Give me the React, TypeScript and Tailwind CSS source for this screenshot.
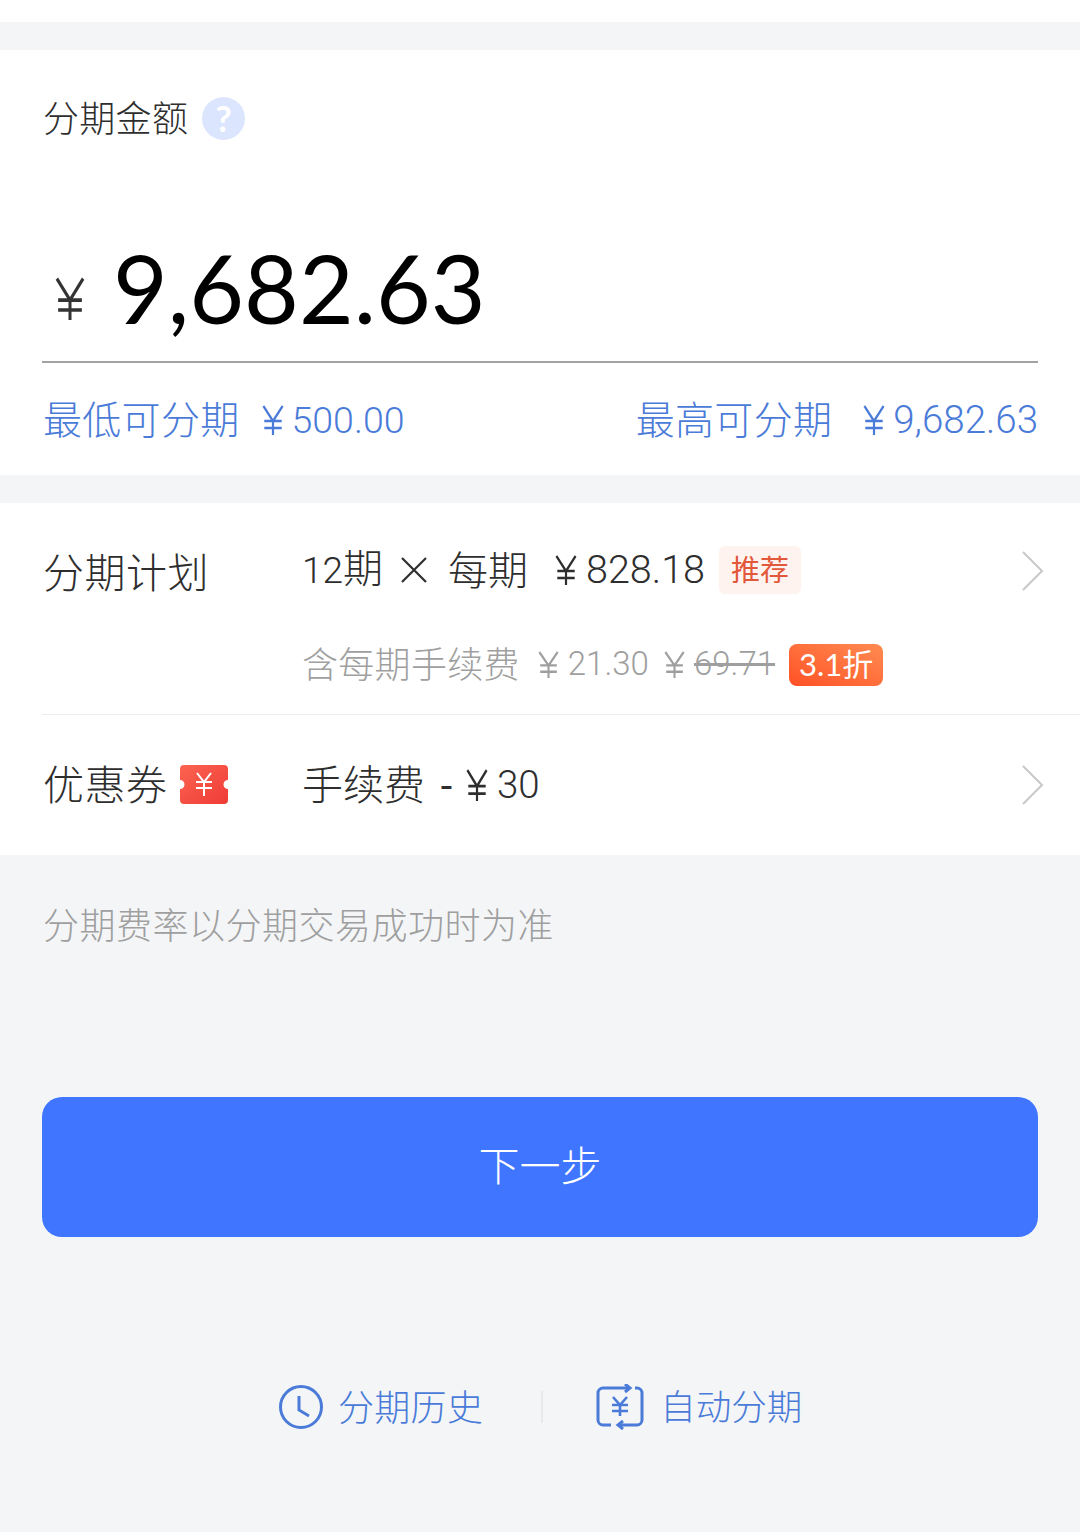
import React from 'react';

const FONT = "font-['Lato','Noto_Sans_CJK_SC',sans-serif]";
const DIGITS = "font-['Roboto','Noto_Sans_CJK_SC',sans-serif] font-light";

const YenIcon = ({ className }: { className?: string }) => (
  <svg viewBox="0 0 24 28" preserveAspectRatio="none" className={className} fill="none" stroke="currentColor" strokeWidth="2.400">
    <path d="M1.500 1l10.500 14L22.500 1M12 15v13M2.500 15h19M2.500 21.500h19" />
  </svg>
);

const Chevron = () => (
  <svg viewBox="0 0 22 40" className="w-[22px] h-[40px] text-[#c8c8c8]" fill="none" stroke="currentColor" strokeWidth="2">
    <path d="M1 1l19 19L1 39" />
  </svg>
);

const Price = ({ value, yen, text, gap = 'ml-[9px]' }: { value: string; yen: string; text: string; gap?: string }) => (
  <span className={`inline-flex items-center ${DIGITS} ${text}`}>
    <YenIcon className={yen} />
    <span className={gap}>{value}</span>
  </span>
);

export default function App() {
  return (
    <div className={`w-[1080px] h-[1532px] bg-[#f4f5f7] overflow-hidden ${FONT}`}>
      <div className="h-[22px] bg-white" />

      {/* amount */}
      <section className="mt-[28px] h-[425px] bg-white px-[42px] flex flex-col">
        <div className="pt-[46px] h-[90px] flex items-center gap-[14px] pl-[1px] text-[36px] font-light tracking-[0.3px] text-[#2e2e2e]">
          <span className="-mt-[1px]">分期金额</span>
          <span className="w-[43px] h-[43px] rounded-full bg-[#dbe5fd] text-white text-[36px] font-bold flex items-center justify-center">?</span>
        </div>
        <div className="mt-[79px] h-[142px] flex items-center pl-[13px] border-b-2 border-[#a3a3a3] box-content">
          <YenIcon className="w-[30px] h-[43px] text-[#333] mt-[16px]" />
          <span className="ml-[28px] -mt-[3px] text-[94.500px] leading-none text-black">9,682.63</span>
        </div>
        <div className="mt-[26px] flex justify-between items-center pl-[1px] text-[#4a7bd8]">
          <div className="flex items-center gap-[22px]">
            <span className="text-[39px] font-light tracking-[0.3px]">最低可分期</span>
            <Price value="500.00" text="text-[37.500px] mt-[2px]" yen="w-[22px] h-[30px]" gap="ml-[8px]" />
          </div>
          <div className="flex items-center gap-[31px]">
            <span className="text-[39px] font-light tracking-[0.3px]">最高可分期</span>
            <Price value="9,682.63" text="text-[38.500px] mt-[2px]" yen="w-[22px] h-[30px]" gap="ml-[8px]" />
          </div>
        </div>
      </section>

      {/* plan */}
      <section className="mt-[28px] h-[352px] bg-white pl-[42px]">
        <div className="h-[212px] flex border-b border-[#ececec] pr-[36px]">
          <div className="w-[260px] pl-[1px] pt-[42px] text-[41px] leading-[56px] font-light tracking-[0.5px] text-[#2e2e2e]">分期计划</div>
          <div className="flex-1">
            <div className="pt-[38px] h-[96px] flex items-center text-[#2e2e2e]">
              <span className={`text-[37px] w-[79px] whitespace-nowrap ${DIGITS}`}>12<span className="text-[40px]">期</span></span>
              <svg viewBox="0 0 26 26" className="w-[26px] h-[26px] ml-[20px]" fill="none" stroke="currentColor" strokeWidth="2.200">
                <path d="M1 1l24 24M25 1L1 25" />
              </svg>
              <span className="ml-[21px] text-[40px] font-light">每期</span>
              <Price value="828.18" text="ml-[27px] text-[39.500px]" yen="w-[22px] h-[30px]" />
              <span className="ml-[14px] w-[82px] h-[48px] rounded-[6px] bg-[#fff3f0] text-[#e2583a] text-[29px] flex items-center justify-center">推荐</span>
            </div>
            <div className="mt-[38px] flex items-center text-[36px] font-light text-[#9f9f9f]">
              <span className="tracking-[0.3px]">含每期手续费</span>
              <Price value="21.30" text="ml-[18px] text-[33px]" yen="w-[21px] h-[27px]" />
              <Price value="69.71" text="ml-[15px] text-[33px]" yen="w-[21px] h-[27px]" gap="ml-[9px] line-through" />
              <span className="ml-[14px] mt-[1px] w-[94px] h-[42px] rounded-[8px] bg-gradient-to-tr from-[#ff4f24] to-[#ff8a50] text-white text-[31px] font-normal flex items-center justify-center">3.1折</span>
            </div>
          </div>
          <div className="pt-[48px]"><Chevron /></div>
        </div>
        <div className="h-[139px] flex items-center pr-[36px]">
          <div className="w-[260px] pl-[1px] flex items-center text-[41px] font-light tracking-[0.5px] text-[#2e2e2e]">
            <span>优惠券</span>
            <svg viewBox="0 0 48 39" className="w-[48px] h-[39px] ml-[12px]">
              <defs>
                <linearGradient id="t" x1="0" y1="0" x2="1" y2="1">
                  <stop offset="0" stopColor="#fb6450" />
                  <stop offset="1" stopColor="#ef3b37" />
                </linearGradient>
              </defs>
              <path d="M4 0h40a4 4 0 0 1 4 4v11a4.500 4.500 0 0 0 0 9v11a4 4 0 0 1-4 4H4a4 4 0 0 1-4-4V24a4.500 4.500 0 0 0 0-9V4a4 4 0 0 1 4-4z" fill="url(#t)" />
              <path d="M17 8l7 9 7-9M24 17v14M16 17h16M16 23h16" fill="none" stroke="#fff" strokeWidth="2" />
            </svg>
          </div>
          <div className="flex-1 flex items-center text-[#2e2e2e]">
            <span className="text-[41px] font-light">手续费</span>
            <span className="ml-[14px] text-[40px]">-</span>
            <Price value="30" text="ml-[12px] text-[38.500px]" yen="w-[22px] h-[32px]" gap="ml-[9px]" />
          </div>
          <Chevron />
        </div>
      </section>

      <p className="mt-[47px] pl-[43px] text-[36px] leading-[46px] font-light tracking-[0.5px] text-[#9f9f9f]">分期费率以分期交易成功时为准</p>

      <button className="mt-[149px] ml-[42px] w-[996px] h-[140px] rounded-[20px] bg-[#3f75ff] text-white text-[41px] font-light">
        <span className="relative -top-[1px]">下一步</span>
      </button>

      {/* links */}
      <div className="mt-[143px] flex items-center pl-[278px] text-[36px] font-light text-[#4a7bd8]">
        <svg viewBox="0 0 46 46" className="w-[46px] h-[46px]" fill="none" stroke="currentColor" strokeWidth="3">
          <circle cx="23" cy="23" r="20.500" />
          <path d="M21 12v14l10 6" />
        </svg>
        <span className="ml-[14px] tracking-[0.3px]">分期历史</span>
        <span className="ml-[58px] w-[2px] h-[32px] bg-[#e8e9eb]" />
        <svg viewBox="0 0 48 46" className="w-[48px] h-[46px] ml-[53px]" fill="none" stroke="currentColor" strokeWidth="3">
          <path d="M34 4H7a5 5 0 0 0-5 5v27a5 5 0 0 0 5 5h8" />
          <path d="M22 41h19a5 5 0 0 0 5-5V9a5 5 0 0 0-5-5h-2" />
          <path d="M29 0l5 4-5 4M27 37l-5 4 5 4" />
          <path d="M17 13l7 8 7-8M24 21v11M16 21h16M16 27h16" strokeWidth="2.600" />
        </svg>
        <span className="ml-[16px] text-[35.500px]">自动分期</span>
      </div>
    </div>
  );
}
